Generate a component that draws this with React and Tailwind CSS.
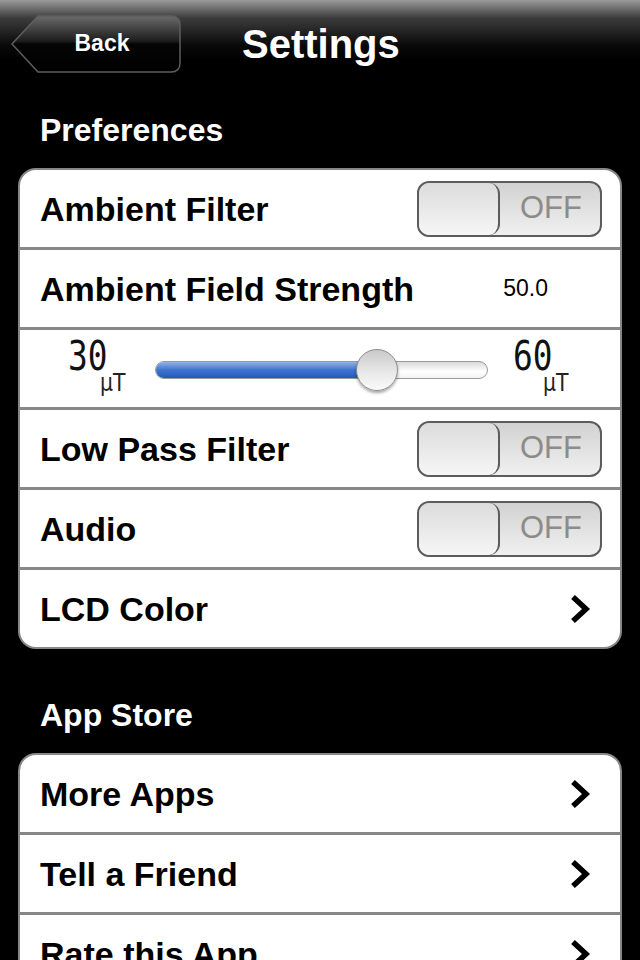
import React from 'react';

const font = { fontFamily: '"Liberation Sans", Arial, sans-serif' };

const Toggle = () => (
  <div className="flex h-[56px] w-[185px] items-stretch rounded-[12px] border-2 border-[#5c5c5c] bg-[linear-gradient(to_bottom,#d2d2d2,#f0f0f0)]">
    <div className="w-[81px] rounded-[11px] border-r-2 border-[#5c5c5c] bg-[linear-gradient(to_bottom,#dcdcdc,#f6f6f6)]" />
    <div className="flex flex-1 items-center justify-center pl-[2px] text-[31px] text-[#8c8c8c]">OFF</div>
  </div>
);

const Chevron = () => (
  <svg width="24" height="30" viewBox="0 0 24 30" className="shrink-0">
    <polyline points="5,3 18,15 5,27" fill="none" stroke="#000" strokeWidth="5.5" strokeLinejoin="miter" strokeLinecap="butt" />
  </svg>
);

const Row = ({ first, children, className = '' }) => (
  <div className={`flex items-center ${first ? 'h-[77px]' : 'h-[80px] border-t-[3px] border-[#878787]'} ${className}`}>
    {children}
  </div>
);

const Label = ({ children }) => (
  <span className="text-[34px] font-bold leading-none text-black">{children}</span>
);

const SliderLabel = ({ value, unitPad = 'pl-[32px]' }) => (
  <div className="flex w-[60px] flex-col">
    <div className="h-[35px] w-[60px]">
      <span
        className="inline-block origin-left scale-x-[0.8] text-[41px] leading-[0.85] text-[#111]"
        style={{ fontFamily: '"DejaVu Sans Mono", monospace' }}
      >
        {value}
      </span>
    </div>
    <div className={unitPad}>
      <span
        className="inline-block origin-left scale-x-[0.85] text-[24px] leading-[0.8] text-[#222]"
        style={{ fontFamily: '"DejaVu Sans", sans-serif' }}
      >
        μT
      </span>
    </div>
  </div>
);

const Slider = () => {
  const pct = ((50 - 30) / (60 - 30)) * 100;
  return (
    <div className="relative h-[18px] w-[333px] rounded-full border border-[#9a9a9a] bg-[linear-gradient(to_bottom,#d9d9d9,#ffffff_60%,#f2f2f2)]">
      <div
        className="h-full rounded-l-full bg-[linear-gradient(to_bottom,#8fb3ea,#3e74cf_50%,#2458b8)]"
        style={{ width: `${pct}%` }}
      />
      <div
        className="absolute top-1/2 h-[42px] w-[42px] -translate-x-1/2 -translate-y-1/2 rounded-full border border-[#8d8d8d] bg-[linear-gradient(to_bottom,#c9c9c9,#e8e8e8_55%,#fafafa)] shadow-[0_2px_3px_rgba(0,0,0,0.35)]"
        style={{ left: `${pct}%` }}
      />
    </div>
  );
};

export default function App() {
  return (
    <div className="h-[960px] w-[640px] overflow-hidden bg-black" style={font}>
      <div className="flex h-[88px] items-center bg-[linear-gradient(to_bottom,#9a9a9a_0px,#3c3c3c_18px,#0a0a0a_45px,#000_60px)] pl-[11px]">
        <button className="relative -mt-[1px] flex h-[58px] w-[170px] items-center justify-center">
          <svg className="absolute inset-0" width="170" height="58" viewBox="0 0 170 58">
            <defs>
              <linearGradient id="bk" x1="0" y1="0" x2="0" y2="1">
                <stop offset="0" stopColor="#6a6a6a" />
                <stop offset="0.45" stopColor="#1c1c1c" />
                <stop offset="0.5" stopColor="#050505" />
                <stop offset="1" stopColor="#000" />
              </linearGradient>
            </defs>
            <path d="M1 29 L27 1 H160 Q169 1 169 10 V48 Q169 57 160 57 H27 Z" fill="url(#bk)" stroke="#5e5e5e" strokeWidth="1.5" />
          </svg>
          <span className="relative pl-[12px] text-[23px] font-bold text-white">Back</span>
        </button>
        <div className="ml-[61px] text-[40px] font-bold text-white">Settings</div>
      </div>

      <div className="px-[40px] pt-[26px] text-[32px] font-bold leading-none text-white">Preferences</div>

      <div className="mx-[18px] mt-[22px] overflow-hidden rounded-[18px] border-2 border-[#878787] bg-white">
        <Row first className="justify-between pl-[20px] pr-[18px]">
          <Label>Ambient Filter</Label>
          <Toggle />
        </Row>
        <Row className="justify-between pl-[20px] pr-[72px]">
          <Label>Ambient Field Strength</Label>
          <span className="text-[23px] text-black">50.0</span>
        </Row>
        <Row className="pl-[48px]">
          <SliderLabel value="30" />
          <div className="ml-[27px] mt-[2px]">
            <Slider />
          </div>
          <div className="ml-[25px]">
            <SliderLabel value="60" unitPad="pl-[30px]" />
          </div>
        </Row>
        <Row className="justify-between pl-[20px] pr-[18px]">
          <Label>Low Pass Filter</Label>
          <Toggle />
        </Row>
        <Row className="justify-between pl-[20px] pr-[18px]">
          <Label>Audio</Label>
          <Toggle />
        </Row>
        <Row className="justify-between pl-[20px] pr-[28px]">
          <Label>LCD Color</Label>
          <Chevron />
        </Row>
      </div>

      <div className="px-[40px] pt-[50px] text-[32px] font-bold leading-none text-white">App Store</div>

      <div className="mx-[18px] mt-[22px] overflow-hidden rounded-[18px] border-2 border-[#878787] bg-white">
        <Row first className="justify-between pl-[20px] pr-[28px]">
          <Label>More Apps</Label>
          <Chevron />
        </Row>
        <Row className="justify-between pl-[20px] pr-[28px]">
          <Label>Tell a Friend</Label>
          <Chevron />
        </Row>
        <Row className="justify-between pl-[20px] pr-[28px]">
          <Label>Rate this App</Label>
          <Chevron />
        </Row>
      </div>
    </div>
  );
}
